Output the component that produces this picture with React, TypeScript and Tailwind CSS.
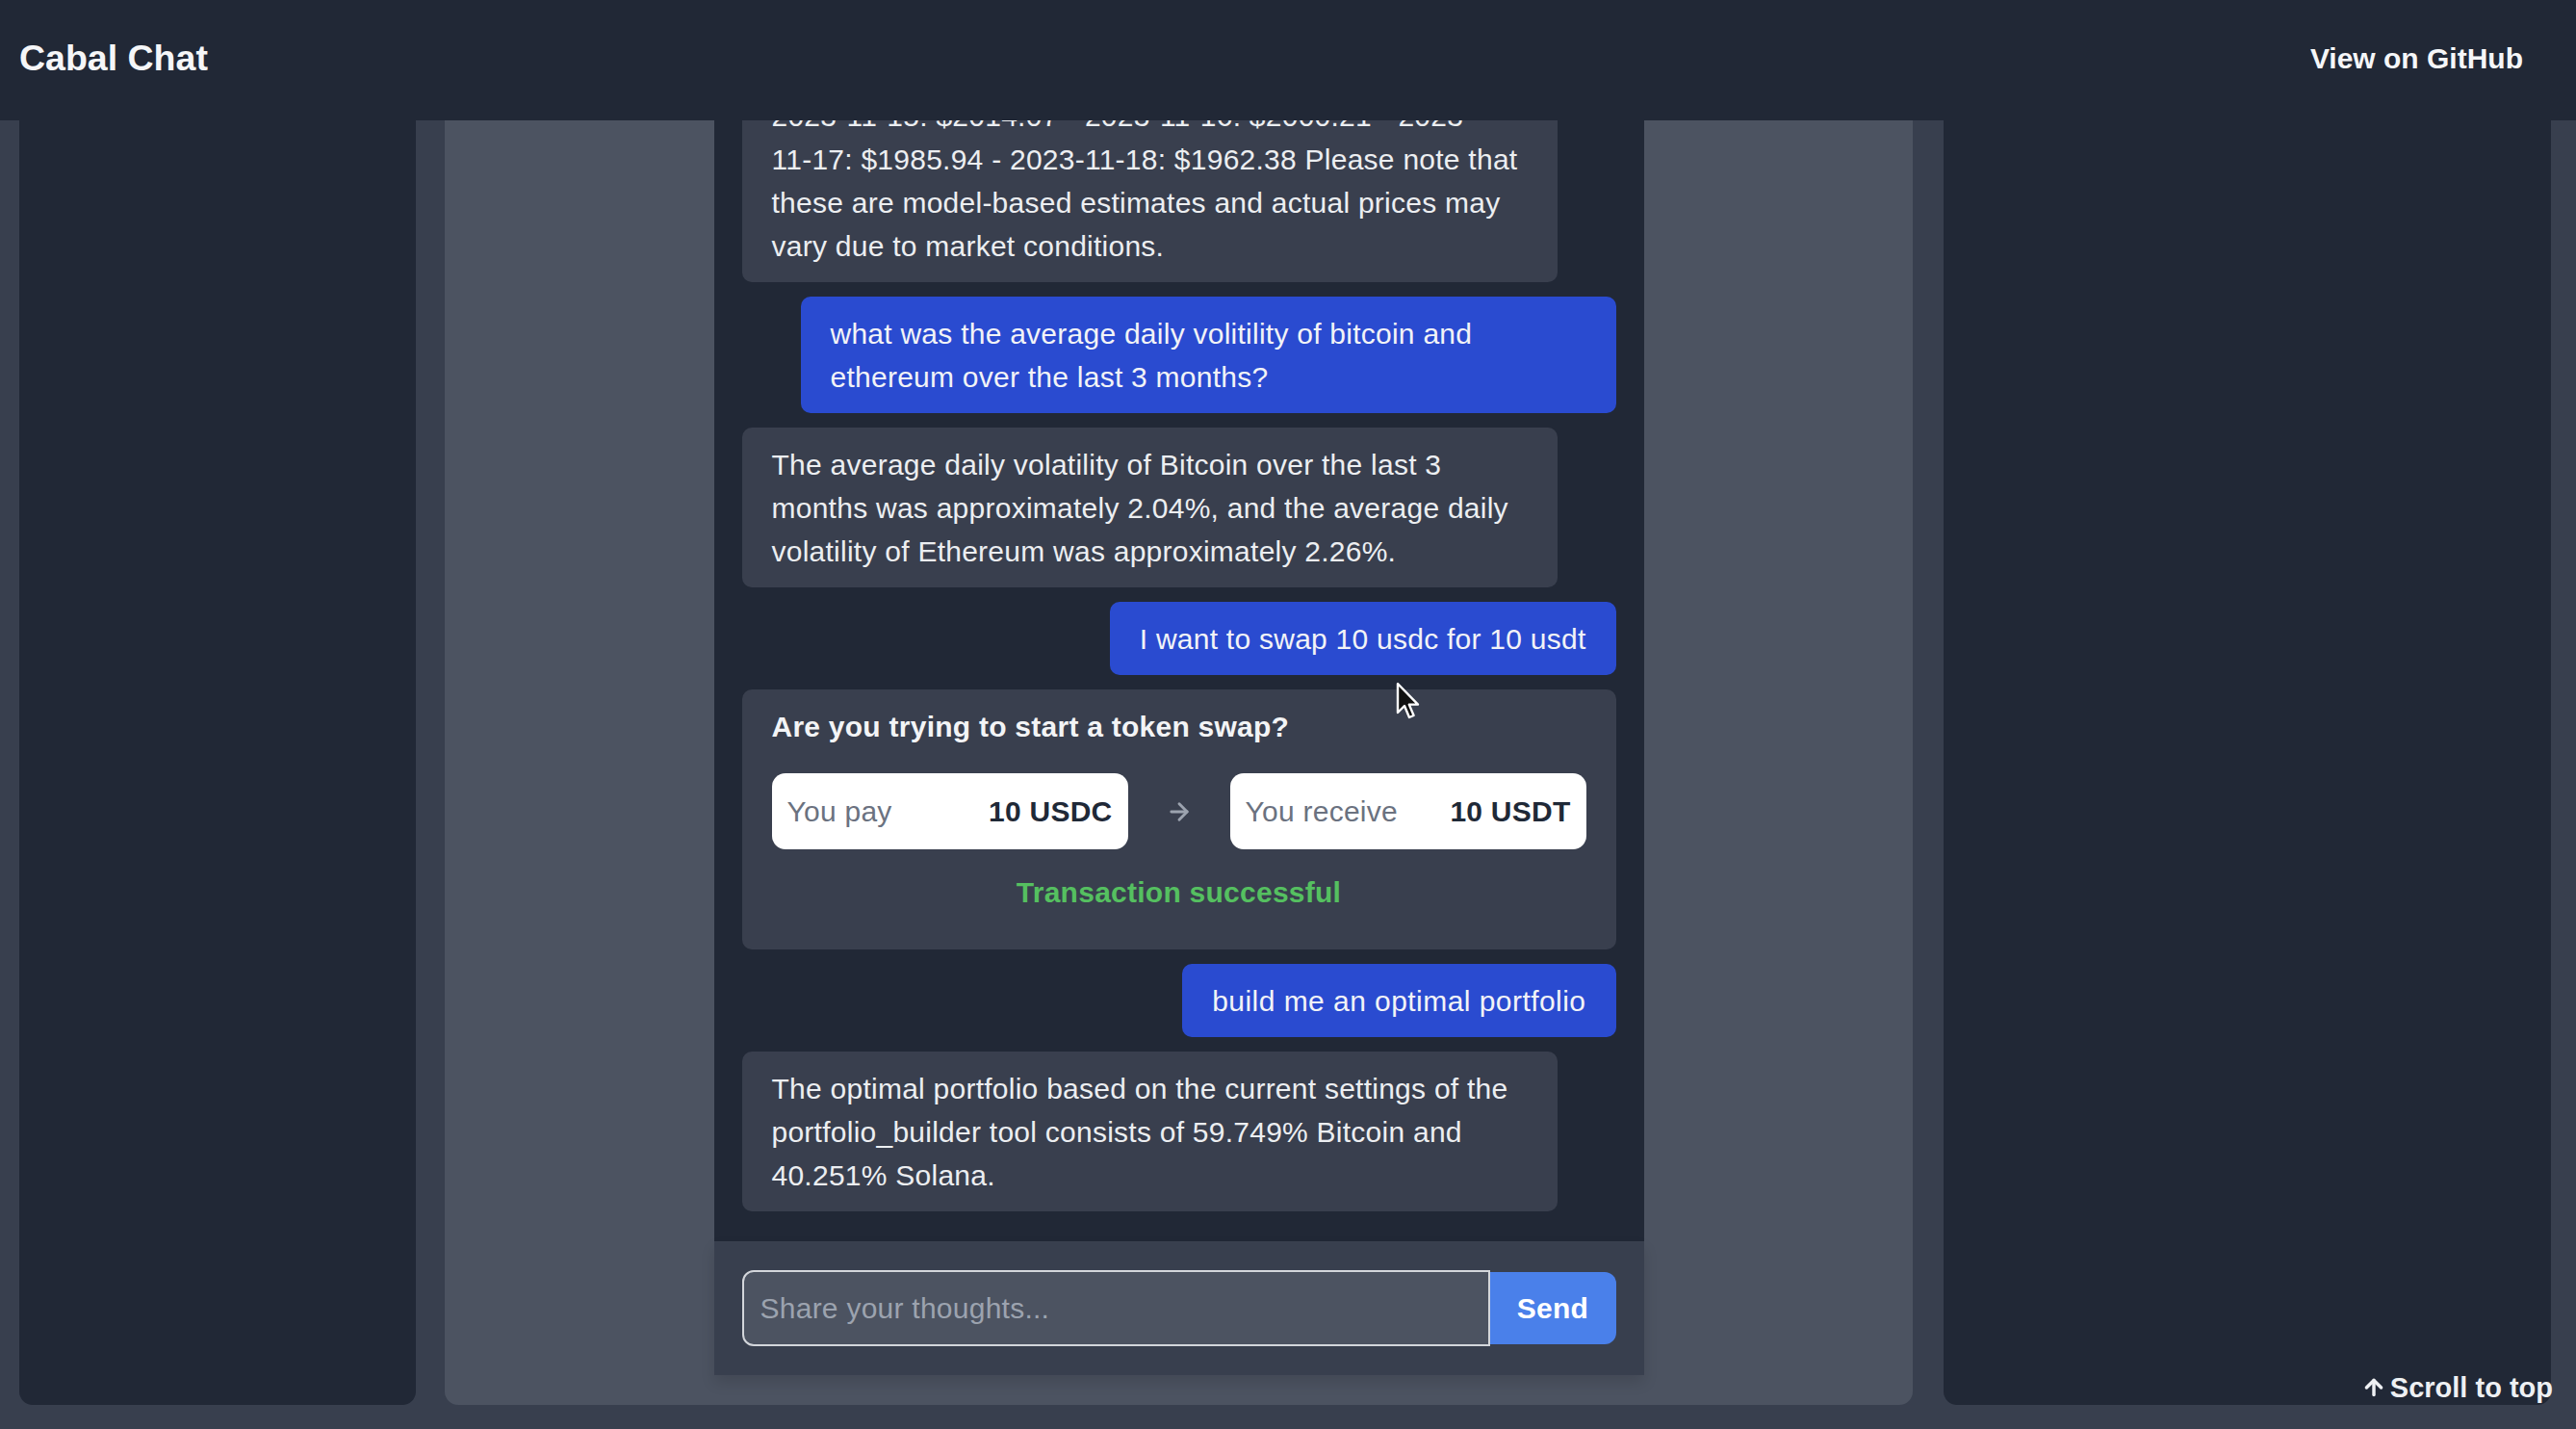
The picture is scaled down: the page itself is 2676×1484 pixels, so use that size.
import React from "react";
import { ArrowRight, ArrowUp } from "lucide-react";

const ai1 = [
  "$2061.47 - 2023-11-13: $2040.15 - 2023-11-14:",
  "2023-11-15: $2014.07 - 2023-11-16: $2000.21 - 2023-",
  "11-17: $1985.94 - 2023-11-18: $1962.38 Please note that",
  "these are model-based estimates and actual prices may",
  "vary due to market conditions.",
];
const user1 = [
  "what was the average daily volitility of bitcoin and",
  "ethereum over the last 3 months?",
];
const ai2 = [
  "The average daily volatility of Bitcoin over the last 3",
  "months was approximately 2.04%, and the average daily",
  "volatility of Ethereum was approximately 2.26%.",
];
const ai3 = [
  "The optimal portfolio based on the current settings of the",
  "portfolio_builder tool consists of 59.749% Bitcoin and",
  "40.251% Solana.",
];

function Lines({ lines }: { lines: string[] }) {
  return (
    <>
      {lines.map((l, i) => (
        <React.Fragment key={i}>
          {l}
          {i < lines.length - 1 && <br />}
        </React.Fragment>
      ))}
    </>
  );
}

function AiBubble({ lines }: { lines: string[] }) {
  return (
    <div className="shrink-0 self-start w-[847px] rounded-[10px] bg-[#393f4e] px-[31px] py-[15.5px] text-[#eceef1]">
      <Lines lines={lines} />
    </div>
  );
}

function UserBubble({ lines, wide }: { lines: string[]; wide?: boolean }) {
  return (
    <div
      className={
        wide
          ? "shrink-0 self-end w-[847px] rounded-[10px] bg-[#2a4bd0] px-[31px] py-[15.5px] text-[#f2f3f7]"
          : "shrink-0 self-end rounded-[10px] bg-[#2a4bd0] px-[31px] py-[15.5px] text-[#f2f3f7] whitespace-nowrap"
      }
    >
      <Lines lines={lines} />
    </div>
  );
}

function SwapCard() {
  return (
    <div className="shrink-0 self-stretch rounded-[10px] bg-[#393f4e] px-[31px] pt-[16px] pb-[37px]">
      <div className="font-bold text-[#f3f4f6]">Are you trying to start a token swap?</div>
      <div className="mt-[26px] flex items-center justify-between">
        <div className="flex h-[79px] w-[370px] items-center justify-between rounded-[14px] bg-white px-[16px]">
          <span className="text-[#6b7280]">You pay</span>
          <span className="font-bold text-[#1f2937]">10 USDC</span>
        </div>
        <ArrowRight className="h-[28px] w-[28px] text-[#9ca3af]" strokeWidth={2.5} />
        <div className="flex h-[79px] w-[370px] items-center justify-between rounded-[14px] bg-white px-[16px]">
          <span className="text-[#6b7280]">You receive</span>
          <span className="font-bold text-[#1f2937]">10 USDT</span>
        </div>
      </div>
      <div className="mt-[22px] text-center font-bold text-[#55c060]">Transaction successful</div>
    </div>
  );
}

export default function App() {
  return (
    <div className="relative flex h-[1484px] w-full flex-col overflow-hidden bg-[#383f4e] font-['Liberation_Sans',Arial,sans-serif] text-[30px] leading-[45px] tracking-[0.25px]">
      <header className="relative z-10 flex h-[125px] shrink-0 items-center justify-between bg-[#212836] pb-[5px] pl-[20px] pr-[55px]">
        <h1 className="text-[37.5px] font-bold leading-[45px] tracking-normal text-[#f5f6f8]">Cabal Chat</h1>
        <a className="text-[30px] font-bold tracking-normal text-[#f5f6f8]">View on GitHub</a>
      </header>

      <div className="flex min-h-0 flex-1 pb-[25px] pl-[20px] pr-[26px]">
        <aside className="w-[412px] shrink-0 rounded-b-[14px] bg-[#212836]" />

        <main className="ml-[30px] flex w-[1525px] shrink-0 justify-center rounded-b-[14px] bg-[#4c5361]">
          <div className="flex h-[1303px] w-[966px] flex-col">
            <div className="flex min-h-0 flex-1 flex-col justify-end gap-[15px] overflow-hidden bg-[#212836] px-[29px] pb-[31px]">
              <AiBubble lines={ai1} />
              <UserBubble lines={user1} wide />
              <AiBubble lines={ai2} />
              <UserBubble lines={["I want to swap 10 usdc for 10 usdt"]} />
              <SwapCard />
              <div className="shrink-0 self-end rounded-[10px] bg-[#2a4bd0] px-[31px] py-[15.5px] text-[#f2f3f7] whitespace-nowrap tracking-[0.45px]">
                build me an optimal portfolio
              </div>
              <AiBubble lines={ai3} />
            </div>
            <div className="flex h-[139px] shrink-0 items-center bg-[#383f4e] px-[29px] shadow-[0_8px_14px_rgba(0,0,0,0.12)]">
              <input
                className="h-[79px] w-[777px] rounded-l-[12px] border-2 border-[#d3d6db] bg-[#4c5361] px-[17px] text-[30px] text-[#eceef1] outline-none placeholder:text-[#9ca3af]"
                placeholder="Share your thoughts..."
              />
              <button className="h-[75px] w-[131px] rounded-r-[12px] bg-[#4a80ea] text-[30px] font-semibold text-white">
                Send
              </button>
            </div>
          </div>
        </main>

        <aside className="ml-[32px] w-[631px] shrink-0 rounded-b-[14px] bg-[#212836]" />
      </div>

      <div className="absolute bottom-[25px] right-[24px] flex items-center gap-[4px] text-[29px] font-bold leading-[36px] tracking-normal text-[#eef0f3]">
        <ArrowUp className="h-[26px] w-[26px]" strokeWidth={3.2} />
        <span>Scroll to top</span>
      </div>

      <svg className="absolute left-[1450px] top-[708px]" width="26" height="40" viewBox="0 0 13 20">
        <path d="M1 1 L1 16 L4.5 12.5 L7 18.5 L9.3 17.5 L6.9 11.8 L11.5 11.8 Z" fill="#111" stroke="#fff" strokeWidth="1.2" strokeLinejoin="round" />
      </svg>
    </div>
  );
}
